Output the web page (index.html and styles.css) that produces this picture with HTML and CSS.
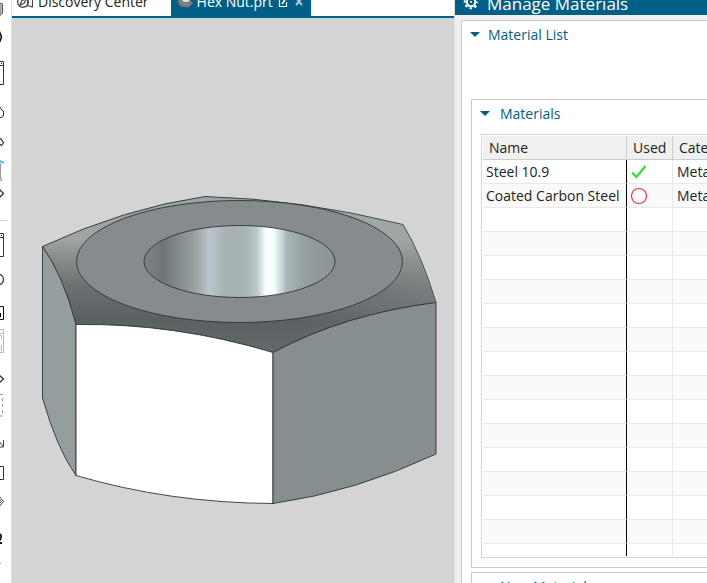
FILE: index.html
```html
<!DOCTYPE html>
<html lang="en">
<head>
<meta charset="utf-8">
<title>Hex Nut.prt</title>
<link rel="stylesheet" href="styles.css">
</head>
<body>
<div class="app">
  <nav class="toolbar" aria-label="Tools">
    <button class="tool h24" aria-label="Solid"><svg viewBox="0 0 8 24"><path d="M-4 5l4-2 2.500 1v9l-4 4" fill="#bbb" stroke="#555"/><path d="M0 5v10" stroke="#888"/></svg></button>
    <button class="tool h24" aria-label="Point"><svg viewBox="0 24 8 24"><path d="M-3 37l3-4 1.500 4-1.500 4z" fill="none" stroke="#111" stroke-width="1.600"/></svg></button>
    <button class="tool h48" aria-label="Window"><svg viewBox="0 48 8 48"><path d="M-1 61.500h4.500v23H-1M0 65.500h3" fill="none" stroke="#333"/><path d="M1 63h1v1H1z"/></svg></button>
    <button class="tool h32" aria-label="Body"><svg viewBox="0 96 8 32"><path d="M-1 109l1.500-1.500L1.500 110l2 1v5L1 117.500H-1" fill="none" stroke="#333"/></svg></button>
    <button class="tool h24" aria-label="Edge"><svg viewBox="0 128 8 24"><path d="M-1 138l2 1 2.500 4-2 2.500-2-1.500" fill="none" stroke="#333" stroke-width="1.200"/></svg></button>
    <button class="tool h32" aria-label="Measure"><svg viewBox="0 152 8 32"><path d="M0.500 163v16" stroke="#999" fill="none"/><path d="M0 178.500h1.500v2H0" fill="none" stroke="#999"/><path d="M0 161l4 2" stroke="#18b4e4" stroke-width="1.500"/></svg></button>
    <button class="tool h24" aria-label="Next"><svg viewBox="0 184 8 24"><path d="M-1 189l4.500 4.500L-1 198" fill="none" stroke="#333" stroke-width="1.300"/></svg></button>
    <hr class="divider">
    <button class="tool h32" aria-label="Part window"><svg viewBox="0 232 8 32"><path d="M-1 233.500h4.500v23H-1M0 237.500h3" fill="none" stroke="#333"/><path d="M1 235h1v1H1z"/></svg></button>
    <button class="tool h32" aria-label="Circle"><svg viewBox="0 264 8 32"><circle cx="-2" cy="279.500" r="5.500" fill="none" stroke="#333" stroke-width="1.300"/></svg></button>
    <button class="tool h32" aria-label="Sheet"><svg viewBox="0 296 8 32"><path d="M-1 306.500h4.500v13H-1" fill="none" stroke="#111"/><path d="M0 313h1v4H0z"/></svg></button>
    <button class="tool h32" aria-label="Fit view" disabled><svg viewBox="0 328 8 32"><path d="M-1 329.500h4.500v23H-1M0 333.500h3M0 335.500h1.500v4M1.500 345v5H0" fill="none" stroke="#bbb"/></svg></button>
    <button class="tool h32" aria-label="Rotate"><svg viewBox="0 360 8 32"><path d="M-1 375l4.500 4-4.500 4" fill="none" stroke="#333" stroke-width="1.300"/></svg></button>
    <button class="tool h32" aria-label="Selection"><svg viewBox="0 392 8 32"><path d="M0 394.500h2.500V416H0" fill="none" stroke="#999" stroke-dasharray="3 3"/></svg></button>
    <button class="tool h32" aria-label="Move"><svg viewBox="0 424 8 32"><path d="M-1 441l4 5M3.500 440v7H-1" fill="none" stroke="#444"/></svg></button>
    <button class="tool h32" aria-label="Rectangle"><svg viewBox="0 456 8 32"><path d="M-1 466.500h4.500v13H-1" fill="none" stroke="#333"/></svg></button>
    <button class="tool h32" aria-label="Plane"><svg viewBox="0 488 8 32"><path d="M-1 496l4.500 5.500L-1 507M-1 499l2.500 2.500L-1 504" fill="none" stroke="#444"/></svg></button>
    <button class="tool h32" aria-label="User"><svg viewBox="0 520 8 32"><path d="M0 534.500c1.500 0 1.500 4-.5 6M0 543h2" fill="none" stroke="#111" stroke-width="1.800"/></svg></button>
    <button class="tool h32" aria-label="More"><svg viewBox="0 552 8 32"><path d="M0 563.500h1" stroke="#999"/></svg></button>
  </nav>

  <main class="workspace">
    <div class="tabs">
      <button class="tab">
        <svg class="tab-icon" viewBox="0 0 16 16"><circle cx="6" cy="8" r="5.300" fill="#fff" stroke="#444" stroke-width="1.300"/><path d="M1.500 4.500l4-3v4z" fill="#e0203c"/><path d="M3 11l1.500-4L9 4.500 7.500 9z" fill="none" stroke="#444" stroke-width="1.200"/><path d="M10.500 1v10.500l5 1.500V1" fill="none" stroke="#444" stroke-width="1.200"/></svg>
        <span>Discovery Center</span>
      </button>
      <button class="tab active">
        <svg class="tab-icon" viewBox="0 0 16 16"><path d="M1 5l5-4 6 2 3 5-4 4-7-1z" fill="#8d8f90" stroke="#444"/><path d="M1 6.500l3 5 7 1 4.500-4" fill="none" stroke="#777" stroke-width="2"/><ellipse cx="9" cy="6.500" rx="4" ry="2.500" fill="#ddd" stroke="#555"/></svg>
        <span>Hex Nut.prt</span>
        <svg class="mini" viewBox="0 0 10 14"><path d="M5 3.500H1.500v8h7V7" fill="none" stroke="#fff" stroke-width="1.200"/><path d="M4 9l5-7" stroke="#fff" stroke-width="1.500"/></svg>
        <svg class="mini" viewBox="0 0 10 14"><path d="M2 3l6 7M8 3L2 10" stroke="#b8c4ca" stroke-width="2"/></svg>
      </button>
    </div>
    <div class="canvas">
      <svg class="model" viewBox="12 18 442 565" role="img" aria-label="Hex nut">
        <defs>
          <linearGradient id="chamfer" gradientUnits="userSpaceOnUse" x1="0" y1="196" x2="0" y2="352">
            <stop offset="0" stop-color="#9ea4a5"/><stop offset=".28" stop-color="#9ea4a4"/><stop offset=".42" stop-color="#848989"/><stop offset=".6" stop-color="#686e6e"/><stop offset=".8" stop-color="#5b6163"/><stop offset="1" stop-color="#65696b"/>
          </linearGradient>
          <linearGradient id="right-light" gradientUnits="userSpaceOnUse" x1="300" y1="0" x2="436" y2="0">
            <stop offset="0" stop-color="#a9b1b3" stop-opacity="0"/><stop offset="1" stop-color="#a9b1b3" stop-opacity=".25"/>
          </linearGradient>
          <linearGradient id="bore" gradientUnits="userSpaceOnUse" x1="144" y1="0" x2="335" y2="0">
            <stop offset="0" stop-color="#7d8384"/><stop offset=".1" stop-color="#6f7677"/><stop offset=".27" stop-color="#9aa2a3"/><stop offset=".34" stop-color="#bac6cb"/><stop offset=".43" stop-color="#a7b1b2"/><stop offset=".53" stop-color="#a8b3b4"/><stop offset=".59" stop-color="#bcc8ca"/><stop offset=".64" stop-color="#fff"/><stop offset=".68" stop-color="#f6ffff"/><stop offset=".75" stop-color="#a9b4b7"/><stop offset=".85" stop-color="#949e9f"/><stop offset="1" stop-color="#8b9496"/>
          </linearGradient>
        </defs>
        <g stroke="#303435" stroke-width=".9" stroke-linejoin="round">
          <path fill="url(#chamfer)" d="M42.500 246.500Q125 208 205 196.500Q300 199 403 224.500Q422 256 436 302.500Q345 314 273 352.500Q175 323 76 324.500Q63 275 42.500 246.500z"/>
          <path fill="url(#right-light)" stroke="none" d="M300 200L403 224.500Q422 256 436 302.500Q365 311 300 338z"/>
          <path fill="#959e9f" d="M42.500 246.500Q63 275 76 324.500V475.500Q57 449 42.500 398z"/>
          <path fill="#fff" d="M76 324.500Q175 323 273 352.500V503.500Q170 503 76 475.500z"/>
          <path fill="#868e8f" d="M273 352.500Q345 314 436 302.500V454Q355 492 273 503.500z"/>
          <ellipse cx="239.500" cy="261.500" rx="163" ry="61" fill="#868b8d"/>
          <ellipse cx="239.500" cy="261.500" rx="95.500" ry="36" fill="url(#bore)"/>
        </g>
      </svg>
    </div>
  </main>

  <aside class="panel">
    <header class="panel-title">
      <svg class="gear" viewBox="0 0 16 16"><circle cx="8" cy="8" r="4.300" fill="none" stroke="#fff" stroke-width="2.200"/><circle cx="8" cy="8" r="6.300" fill="none" stroke="#fff" stroke-width="2" stroke-dasharray="2.400 2.548" stroke-dashoffset="1.200"/><circle cx="8" cy="8" r="1" fill="#fff"/></svg>
      <h1>Manage Materials</h1>
    </header>
    <section class="group outer">
      <h2 class="caption"><svg class="arrow" viewBox="0 0 10 6"><path d="M0 0h10L5 5z"/></svg>Material List</h2>
      <section class="group inner">
        <h3 class="caption"><svg class="arrow" viewBox="0 0 10 6"><path d="M0 0h10L5 5z"/></svg>Materials</h3>
        <div class="grid-box">
          <table class="materials">
            <colgroup><col class="c-name"><col class="c-used"><col class="c-cat"></colgroup>
            <thead><tr><th>Name</th><th>Used</th><th>Category</th></tr></thead>
            <tbody>
              <tr><td>Steel 10.9</td><td><svg class="mark" viewBox="0 0 18 18"><path d="M2 9.500l4.500 4.500L15.500 3" fill="none" stroke="#2fe03c" stroke-width="2.200"/></svg></td><td>Metal</td></tr>
              <tr><td>Coated Carbon Steel</td><td><svg class="mark" viewBox="0 0 18 18"><circle cx="9" cy="9" r="7.500" fill="none" stroke="#f0304c" stroke-width="1.200"/></svg></td><td>Metal</td></tr>
              <tr><td></td><td></td><td></td></tr>
              <tr><td></td><td></td><td></td></tr>
              <tr><td></td><td></td><td></td></tr>
              <tr><td></td><td></td><td></td></tr>
              <tr><td></td><td></td><td></td></tr>
              <tr><td></td><td></td><td></td></tr>
              <tr><td></td><td></td><td></td></tr>
              <tr><td></td><td></td><td></td></tr>
              <tr><td></td><td></td><td></td></tr>
              <tr><td></td><td></td><td></td></tr>
              <tr><td></td><td></td><td></td></tr>
              <tr><td></td><td></td><td></td></tr>
              <tr><td></td><td></td><td></td></tr>
              <tr><td></td><td></td><td></td></tr>
              <tr class="last"><td></td><td></td><td></td></tr>
            </tbody>
          </table>
        </div>
      </section>
      <section class="group inner next">
        <h3 class="caption"><svg class="arrow" viewBox="0 0 10 6"><path d="M0 0h10L5 5z"/></svg>New Materials</h3>
      </section>
    </section>
  </aside>
</div>
</body>
</html>
```
FILE: styles.css
```css
* { box-sizing: border-box; }

body {
  margin: 0;
  overflow: hidden;
  background: #fff;
  color: #222;
  font: 14px/20px "Open Sans", "Noto Sans", sans-serif;
}

button {
  border: 0;
  padding: 0;
  background: none;
  color: inherit;
  font: inherit;
}

.app {
  display: flex;
  height: 100vh;
  overflow: hidden;
}

/* Left tool strip */
.toolbar {
  flex: none;
  width: 12px;
  border-right: 1px solid #e0e0e0;
}
.tool { display: block; }
.tool svg { display: block; width: 8px; height: 100%; }
.h24 { height: 24px; }
.h32 { height: 32px; }
.h48 { height: 48px; }
.divider {
  width: 7px;
  height: 1px;
  margin: 12px 0 11px;
  border: 0;
  background: #d0d0d0;
}

/* Document tabs and model view */
.workspace {
  flex: 1;
  min-width: 0;
  display: flex;
  flex-direction: column;
}
.tabs {
  display: flex;
  align-items: flex-end;
  gap: 17px;
  height: 18px;
  overflow: hidden;
  border-bottom: 2px solid #005f87;
}
.tab {
  display: flex;
  align-items: center;
  gap: 5px;
  height: 26px;
  padding: 0 5px 2px;
  white-space: nowrap;
}
.tab.active {
  gap: 4px;
  padding: 0 6px 2px;
  background: #005f87;
  color: #fff;
}
.tab-icon { width: 16px; height: 16px; }
.mini { width: 12px; height: 14px; }
.canvas {
  flex: 1;
  min-height: 0;
  background: #d4d4d4;
}
.model { display: block; width: 100%; height: 100%; }

/* Materials panel */
.panel {
  flex: none;
  width: 253px;
  overflow: hidden;
  border-left: 1px solid #e0e0e0;
  background: #f0f0f0;
}
.panel-title {
  display: flex;
  align-items: flex-end;
  gap: 8px;
  height: 15px;
  margin-left: -1px;
  padding: 0 9px;
  overflow: hidden;
  background: #005f87;
  color: #fff;
}
.gear { flex: none; width: 16px; height: 16px; margin-bottom: 5px; }
h1 {
  margin: 0;
  font-size: 17px;
  font-weight: 400;
  line-height: 22px;
  white-space: nowrap;
}
.group {
  border: 1px solid #ccc;
  border-right: 0;
  background: #fff;
}
.outer { margin: 5px 0 0 6px; }
.inner { margin: 50px 0 0 9px; padding-bottom: 9px; }
.next { margin-top: 4px; }
.caption {
  display: flex;
  align-items: center;
  gap: 8px;
  margin: 0;
  padding: 4px 8px;
  color: #005f87;
  font-size: 14px;
  font-weight: 400;
  line-height: 20px;
}
.inner .caption { gap: 10px; }
.arrow { width: 10px; height: 6px; fill: #005f87; }
.grid-box {
  margin: 6px 0 0 9px;
  padding: 1px 0 1px 1px;
  overflow: hidden;
  border: 1px solid #d4d4d4;
  border-right: 0;
}
.materials {
  width: 260px;
  border-collapse: separate;
  border-spacing: 0;
  table-layout: fixed;
}
.c-name { width: 144px; }
.c-used { width: 46px; }
th, td {
  height: 24px;
  padding: 0 3px;
  border-right: 1px solid #e8e8e8;
  border-bottom: 1px solid #e8e8e8;
  line-height: 20px;
  text-align: left;
  white-space: nowrap;
}
th {
  padding: 0 6px;
  border-color: #ccc;
  background: #f0f0f0;
  font-weight: 400;
}
td:first-child { border-right-color: #000; }
td:last-child { padding-left: 4px; }
tbody tr:nth-child(even) { background: #fafafa; }
.materials .last td { height: 12px; border-bottom: 0; }
.mark { display: block; width: 18px; height: 18px; }
```
